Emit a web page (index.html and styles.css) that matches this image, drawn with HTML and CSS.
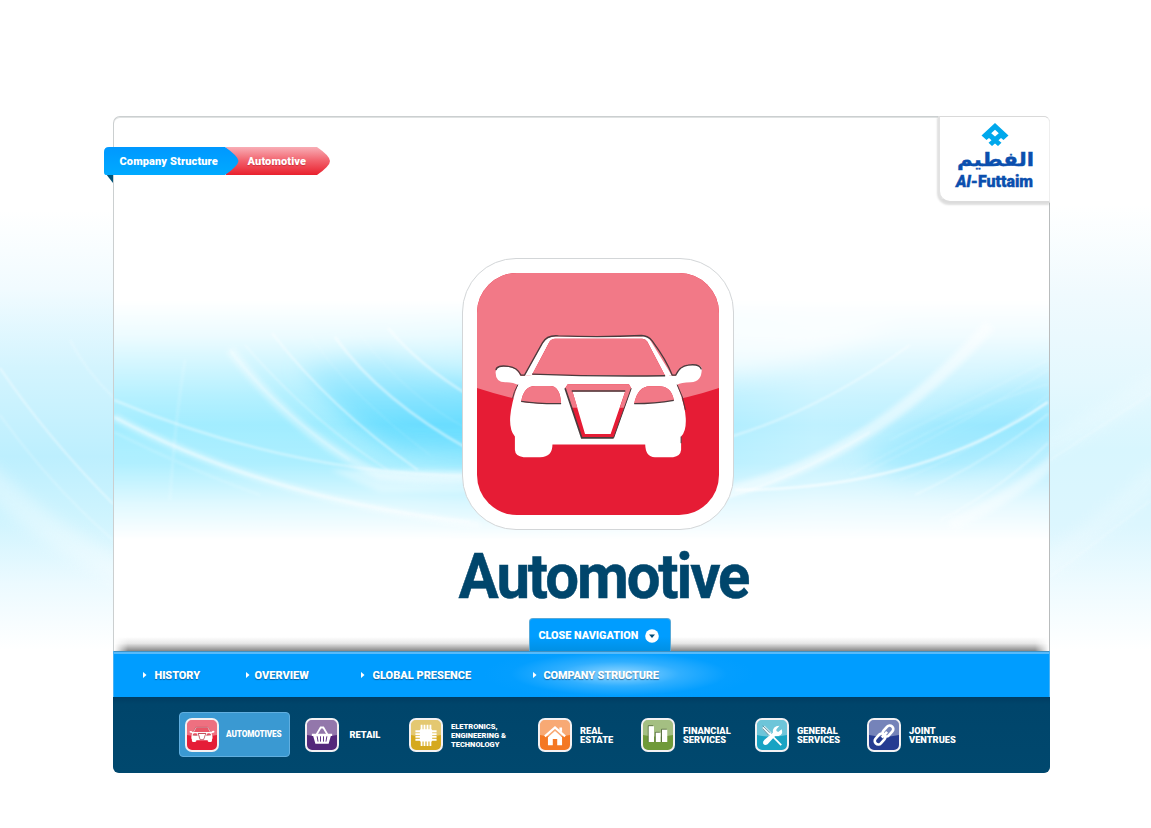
FILE: index.html
```html
<!DOCTYPE html>
<html lang="en">
<head>
<meta charset="utf-8">
<title>Al-Futtaim - Automotive</title>
<link rel="stylesheet" href="styles.css">
</head>
<body>
<svg class="page-waves" viewBox="0 0 1151 828" aria-hidden="true">
  <defs>
    <linearGradient id="outL" x1="0" y1="210" x2="0" y2="650" gradientUnits="userSpaceOnUse">
      <stop offset="0" stop-color="#fff"/><stop offset=".18" stop-color="#f1fbff"/><stop offset=".36" stop-color="#d3f4fe"/><stop offset=".56" stop-color="#bdeffe"/><stop offset=".7" stop-color="#cff4fe"/><stop offset=".85" stop-color="#ecfaff"/><stop offset="1" stop-color="#fff"/>
    </linearGradient>
    <linearGradient id="outR" x1="0" y1="205" x2="0" y2="650" gradientUnits="userSpaceOnUse">
      <stop offset="0" stop-color="#fff"/><stop offset=".2" stop-color="#f0fafe"/><stop offset=".4" stop-color="#e4f8fe"/><stop offset=".55" stop-color="#d8f6fe"/><stop offset=".72" stop-color="#dcf6fe"/><stop offset=".86" stop-color="#effbff"/><stop offset="1" stop-color="#fff"/>
    </linearGradient>
    <filter id="soft" x="-50%" y="-50%" width="200%" height="200%"><feGaussianBlur stdDeviation="7"/></filter>
    <filter id="fine"><feGaussianBlur stdDeviation=".8"/></filter>
  </defs>
  <rect x="0" y="205" width="575" height="450" fill="url(#outL)"/>
  <rect x="575" y="205" width="576" height="450" fill="url(#outR)"/>
  <g fill="none" stroke="#fff">
    <path d="M-20 470Q50 540 140 580" stroke-width="26" opacity=".3" filter="url(#soft)"/>
    <path d="M0 368Q45 435 113 504" stroke-width="1.600" opacity=".5" filter="url(#fine)"/>
    <path d="M0 415Q50 485 113 540M70 340Q85 370 113 397" stroke-width="2" opacity=".22" filter="url(#fine)"/>
    <path d="M1040 450Q1100 420 1160 380M1040 570Q1105 525 1160 470" stroke-width="20" opacity=".2" filter="url(#soft)"/>
    <path d="M1050 460L1151 393M1050 577L1151 500" stroke-width="1.500" opacity=".25" filter="url(#fine)"/>
  </g>
</svg>

<main class="panel">
  <svg class="panel-waves" viewBox="114 117 935 535" preserveAspectRatio="none" aria-hidden="true">
    <defs>
      <linearGradient id="fade" x1="0" y1="300" x2="0" y2="540" gradientUnits="userSpaceOnUse">
        <stop offset="0" stop-color="#000"/><stop offset=".15" stop-color="#333"/><stop offset=".4" stop-color="#ccc"/><stop offset=".52" stop-color="#fff"/><stop offset=".68" stop-color="#ddd"/><stop offset=".85" stop-color="#555"/><stop offset="1" stop-color="#000"/>
      </linearGradient>
      <linearGradient id="sky" x1="114" y1="0" x2="1049" y2="0" gradientUnits="userSpaceOnUse">
        <stop offset="0" stop-color="#a4edff"/><stop offset=".3" stop-color="#9fecff"/><stop offset=".42" stop-color="#8ae6ff"/><stop offset=".6" stop-color="#a9ecff"/><stop offset=".75" stop-color="#c0f1ff"/><stop offset="1" stop-color="#b4eeff"/>
      </linearGradient>
      <mask id="band" maskUnits="userSpaceOnUse" x="114" y="280" width="935" height="280"><rect x="114" y="280" width="935" height="280" fill="url(#fade)"/></mask>
      <filter id="blur12" x="-50%" y="-50%" width="200%" height="200%"><feGaussianBlur stdDeviation="11"/></filter>
      <filter id="blur3" x="-20%" y="-20%" width="140%" height="140%"><feGaussianBlur stdDeviation="2.500"/></filter>
      <filter id="blur1" x="-20%" y="-20%" width="140%" height="140%"><feGaussianBlur stdDeviation=".8"/></filter>
    </defs>
    <g mask="url(#band)">
      <rect x="114" y="280" width="935" height="280" fill="url(#sky)"/>
      <path d="M300 365Q350 430 400 452L510 455V385Q440 375 380 345Z" fill="#5ad9ff" opacity=".72" filter="url(#blur12)"/>
      <path d="M860 455Q960 400 1060 365V430Q960 480 900 480Z" fill="#7fe2ff" opacity=".5" filter="url(#blur12)"/>
      <path d="M720 375Q820 365 900 320H700Z" fill="#fff" opacity=".6" filter="url(#blur12)"/>
      <path d="M380 492H480V470H330Z" fill="#fff" opacity=".35" filter="url(#blur3)"/>
    </g>
    <g fill="none" stroke="#fff">
      <path d="M230 350Q300 440 380 475Q430 480 470 478" stroke-width="9" opacity=".38" filter="url(#blur3)"/>
      <path d="M114 417Q270 500 480 525" stroke-width="6" opacity=".5" filter="url(#blur3)"/>
      <path d="M114 417Q270 500 470 522M114 400Q290 474 470 476" stroke-width="2.500" opacity=".4" filter="url(#blur1)"/>
      <path d="M272 333Q330 408 418 470" stroke-width="1.500" opacity=".6" filter="url(#blur1)"/>
      <path d="M245 345Q310 420 388 470M230 350Q280 415 350 460" stroke-width="1.400" opacity=".35" filter="url(#blur1)"/>
      <path d="M335 337Q380 400 470 450M388 328Q420 366 470 396" stroke-width="2.400" opacity=".5" filter="url(#blur1)"/>
      <path d="M360 335Q410 400 470 430M310 335Q350 395 430 455" stroke-width="1" opacity=".2" filter="url(#blur1)"/>
      <path d="M114 432Q190 470 260 495M185 360Q175 420 170 500" stroke-width="3" opacity=".14" filter="url(#blur1)"/>
      <path d="M725 492Q870 460 990 325" stroke-width="12" opacity=".5" filter="url(#blur3)"/>
      <path d="M730 437Q820 410 910 345M728 497Q790 480 870 432" stroke-width="2" opacity=".45" filter="url(#blur1)"/>
      <path d="M735 490Q920 490 1048 402" stroke-width="2.400" opacity=".7" filter="url(#blur1)"/>
      <path d="M915 495Q990 460 1048 414M940 520Q1000 490 1048 443" stroke-width="1.500" opacity=".4" filter="url(#blur1)"/>
      <path d="M950 525Q1010 500 1060 455" stroke-width="12" opacity=".4" filter="url(#blur3)"/>
      <path d="M870 470Q970 420 1048 370M890 440Q970 400 1048 360M850 475Q960 410 1048 384M900 480Q980 450 1048 395" stroke-width="1" opacity=".25" filter="url(#blur1)"/>
    </g>
  </svg>

  <nav class="crumbs">
    <span class="crumb-fold"></span>
    <a class="crumb crumb-root"><span>Company Structure</span></a>
    <a class="crumb crumb-leaf"><span>Automotive</span></a>
  </nav>

  <div class="logo">
    <svg viewBox="0 0 110 86" role="img" aria-label="Al-Futtaim">
      <path fill="#00a8ec" fill-rule="evenodd" d="M55 6L68.500 18.500L63.500 23L61 21L58.500 23.200L61.500 25.800L58 29L55 26.500L52 29L48.500 25.800L51.500 23.200L49 21L46.500 23L41.500 18.500ZM55 12.800L51.200 16.200L55 19.600L58.800 16.200Z"/>
      <text class="logo-ar" x="94" y="49" direction="rtl" textLength="77" lengthAdjust="spacingAndGlyphs">الفطيم</text>
      <text class="logo-en" x="16" y="70" textLength="77" lengthAdjust="spacingAndGlyphs"><tspan font-style="italic">Al</tspan>-Futtaim</text>
    </svg>
  </div>

  <section class="hero">
    <div class="badge">
      <svg viewBox="65 68 728 728" aria-hidden="true">
        <defs>
          <g id="car">
            <path fill="#fff" stroke="none" d="M236 374L287 265Q292 258 300 262H560Q573 258 580 264L645 378H662Q675 346 708 344Q740 342 741 356Q742 395 708 397Q678 398 667 404Q692 470 693 505Q695 545 679 560V600Q677 620 655 622H600Q572 622 571 584H292Q292 622 255 622H205Q180 620 179 600V560Q162 540 165 500Q168 460 188 404Q170 396 150 397Q120 396 121 366Q122 346 155 350Q185 352 196 378H210Z"/>
            <path d="M208 378L262 280Q275 258 300 259H560Q575 257 583 265L652 378L636 374L585 280Q578 266 560 266H300Q288 266 282 276L234 374Z" fill="#fff"/>
          </g>
          <clipPath id="tileClip"><rect x="65" y="68" width="728" height="728" rx="120"/></clipPath>
          <g id="glass">
            <path d="M231 373L282 277Q288 266 300 266H560Q571 265 577 274L631 377Z"/>
            <path d="M198 455Q205 409 240 408H285Q315 408 318 461Q250 462 198 455ZM538 461Q548 410 585 409H610Q650 408 657 451Q600 461 538 461Z"/>
            <path fill-rule="evenodd" d="M330 415L338 403H522L529 415L476 564H380ZM352 424L390 552H467L511 424Z"/>
          </g>
        </defs>
        <g clip-path="url(#tileClip)">
          <rect x="65" y="68" width="728" height="728" fill="#e61c35"/>
          <path d="M65 68H793V414Q429 534 65 414Z" fill="#f27987"/>
          <use href="#car"/>
          <use href="#glass" fill="#e61c35"/>
          <g fill="#f27987">
            <path d="M231 373L282 277Q288 266 300 266H560Q571 265 577 274L631 377Z"/>
            <path d="M198 455Q205 409 240 408H285Q315 408 318 461Q250 462 198 455ZM538 461Q548 410 585 409H610Q650 408 657 451Q600 461 538 461Z"/>
            <path d="M330 415L338 403H522L529 415L509 473H495L511 424H352L367 473H350Z"/>
          </g>
          <g fill="none" stroke="#4a3b3d" stroke-width="4">
            <path d="M122 360Q124 344 160 349Q186 352 197 375H208L262 278Q275 254 310 257Q440 262 560 256Q580 257 592 272Q635 330 652 375H663Q675 348 700 345Q735 340 740 358"/>
            <path d="M231 372Q430 380 631 377M198 454Q250 462 318 461M538 461Q600 461 657 451"/>
            <path d="M350 423H511M330 415L380 564H476" stroke-width="5"/>
            <path d="M476 564L529 415M188 404Q176 425 172 445M667 404Q686 440 692 480M679 560V580" stroke-width="3"/>
          </g>
        </g>
      </svg>
    </div>
    <h1 class="title">Automotive</h1>
  </section>

  <div class="tab-row">
    <button class="nav-tab"><span>CLOSE NAVIGATION</span>
      <svg viewBox="0 0 14 14" aria-hidden="true"><circle cx="7" cy="7" r="6.800" fill="#fff"/><path d="M4 5.500H10L7 9Z" fill="#004a75"/></svg>
    </button>
  </div>

  <nav class="main-nav">
    <a class="n1"><i></i><span>HISTORY</span></a>
    <a class="n2"><i></i><span>OVERVIEW</span></a>
    <a class="n3"><i></i><span>GLOBAL PRESENCE</span></a>
    <a class="n4"><i></i><span>COMPANY STRUCTURE</span></a>
  </nav>

  <nav class="sub-nav">
    <a class="item active">
      <svg class="icon red" viewBox="0 0 34 34"><path class="gloss" d="M0 0H34V17Q17 21 0 17Z"/><g transform="translate(-2.600 -3.500) scale(.0455)"><use href="#car"/><use href="#glass" fill="#ea5567"/><path d="M208 375L275 258H580L652 375M198 454L318 461M538 461L657 451M330 410L380 564H476L529 410Z" fill="none" stroke="#7b3841" stroke-width="9"/></g></svg>
      <span class="small">AUTOMOTIVES</span>
    </a>
    <a class="item retail">
      <svg class="icon purple" viewBox="0 0 34 34"><path class="gloss" d="M0 0H34V17Q17 21 0 17Z"/><path d="M10.500 17L15.500 8.500H18.500L23.500 17" fill="none" stroke="#fff" stroke-width="2"/><path d="M5.500 15.500H28.500V18H27L24.500 27H9.500L7 18H5.500Z" fill="#fff"/><path d="M11.500 18.500L12.500 24.500M15.300 18.500V24.500M18.700 18.500V24.500M22.500 18.500L21.500 24.500" stroke="#5a2f83" stroke-width="1.100"/></svg>
      <span>RETAIL</span>
    </a>
    <a class="item">
      <svg class="icon gold" viewBox="0 0 34 34"><path class="gloss" d="M0 0H34V17Q17 21 0 17Z"/><rect x="10" y="10.500" width="14" height="14" rx="1" fill="#fff"/><path d="M12 5.500V29.500M15.300 5.500V29.500M18.700 5.500V29.500M22 5.500V29.500M5 12.700H29M5 16H29M5 19.200H29M5 22.400H29" stroke="#fff" stroke-width="2.100"/></svg>
      <span class="tiny">ELETRONICS,<br>ENGINEERING &amp;<br>TECHNOLOGY</span>
    </a>
    <a class="item low">
      <svg class="icon orange" viewBox="0 0 34 34"><path class="gloss" d="M0 0H34V17Q17 21 0 17Z"/><path d="M5.500 18.500L17 8.500L28.500 18.500" fill="none" stroke="#fff" stroke-width="2.500"/><path d="M22 8.500H25V14L22 11.500ZM9 19.500L17 12.500L25 19.500V28.500H19.500V21.500H14.500V28.500H9Z" fill="#fff"/></svg>
      <span>REAL<br>ESTATE</span>
    </a>
    <a class="item">
      <svg class="icon green" viewBox="0 0 34 34"><path class="gloss" d="M0 0H34V17Q17 21 0 17Z"/><path d="M6 25V6.500H11.500M14 25V14H19M21 25V10.500H27" fill="none" stroke="#52683c" stroke-width="1"/><path d="M6.500 7H12.500V25H6.500ZM14.500 14.500H20V25H14.500ZM21.500 11H27.500V25H21.500Z" fill="#fff"/></svg>
      <span>FINANCIAL<br>SERVICES</span>
    </a>
    <a class="item">
      <svg class="icon teal" viewBox="0 0 34 34"><path class="gloss" d="M0 0H34V17Q17 21 0 17Z"/><path d="M7 8L15 16" stroke="#e9f6f9" stroke-width="4.500"/><path d="M6.500 6.500L15.500 15M6 9.500L13 17" stroke="#4e8190" stroke-width="1"/><path d="M14 15L27.500 28.500" stroke="#fff" stroke-width="2"/><path d="M25.500 6.500L22 10.500V12.500L24 13.500L28 10.500Q30 17 24.500 18L20.500 18L12 27.500Q9 29.500 7 27Q6 24.500 8.500 22.500L18 14.500Q17 7 25.500 6.500Z" fill="#fff"/></svg>
      <span>GENERAL<br>SERVICES</span>
    </a>
    <a class="item low">
      <svg class="icon blue" viewBox="0 0 34 34"><path class="gloss" d="M0 0H34V17Q17 21 0 17Z"/><g fill="none" stroke="#fff" stroke-width="3"><rect x="-4" y="-7" width="8" height="14" rx="4" transform="translate(21.500 12.500) rotate(42)"/><rect x="-4" y="-7" width="8" height="14" rx="4" transform="translate(12.500 21.500) rotate(42)"/><path d="M14.500 20L20.500 13.500"/></g></svg>
      <span>JOINT<br>VENTRUES</span>
    </a>
  </nav>
</main>
</body>
</html>
```
FILE: styles.css
```css
* { box-sizing: border-box; }
body {
  margin: 0;
  width: 1151px;
  height: 828px;
  overflow: hidden;
  background: #fff;
  font-family: Roboto, "Liberation Sans", sans-serif;
  font-weight: 900;
  color: #fff;
}
.page-waves { position: absolute; left: 0; top: 0; width: 1151px; height: 828px; z-index: -1; }
.panel {
  position: relative;
  display: flex;
  flex-direction: column;
  width: 937px;
  height: 657px;
  margin: 116px 0 0 113px;
  border: 1px solid #cbcfd0;
  border-right-color: #b9bcbd;
  border-radius: 7px;
  background: #fff;
  box-shadow: inset 0 1px #dfe2e2;
}
.panel-waves { position: absolute; left: 0; top: 0; width: 935px; height: 535px; border-radius: 6px; }

/* Breadcrumb ribbon overhanging the panel's left edge */
.crumbs { position: absolute; left: -10px; top: 30px; display: flex; height: 28px; }
.crumb { display: flex; align-items: center; font-size: 11px; font-weight: 900; letter-spacing: .12px; }
.crumb-root {
  position: relative;
  z-index: 1;
  width: 135px;
  padding-left: 15.500px;
  background: linear-gradient(#0098ff, #00aaff);
  clip-path: path("M5 0H121Q134 9 134.500 14Q134 19 121 28H2Q0 28 0 25V5Q0 0 5 0Z");
}
.crumb-leaf {
  width: 104px;
  margin-left: -13px;
  padding-left: 21.500px;
  background: linear-gradient(#f8aeb6, #f2606b 50%, #e9202d);
  clip-path: path("M0 0H91Q104 9 104 14Q104 19 91 28H0Z");
}
.crumb-leaf span { text-shadow: 0 1px 1px rgba(160, 0, 20, .4); }
.crumb-fold { position: absolute; left: 2px; top: 27px; width: 7px; height: 9px; background: #005378; clip-path: polygon(0 0, 100% 0, 100% 100%); }

.logo {
  position: absolute;
  right: -1px;
  top: -1px;
  width: 112px;
  height: 87px;
  background: #fff;
  border: 1px solid #d9d9d9;
  border-bottom: 2px solid #dcdcdc;
  border-left: 2px solid #e2e2e2;
  border-right-color: #eee;
  border-radius: 0 6px 0 12px;
  box-shadow: -1px 2px 2px rgba(0, 0, 0, .13);
  clip-path: inset(0 0 -6px -6px);
}
.logo svg { display: block; width: 110px; height: 86px; }
.logo text { fill: #0b4fae; stroke: #0b4fae; stroke-width: .4px; }
.logo-ar { font: bold 19px "DejaVu Sans", sans-serif; }
.logo-en { font: 900 16.5px Roboto, sans-serif; }

.hero { position: relative; display: flex; flex-direction: column; align-items: center; width: 968px; padding-top: 141px; }
.badge { width: 272px; height: 272px; padding: 14px; border: 1px solid #d3d6d8; border-radius: 54px; background: #fff; }
.badge svg { display: block; width: 242px; height: 242px; }
.title {
  margin: 9px 0 0 11px;
  font-size: 63px;
  line-height: 75px;
  font-weight: 700;
  letter-spacing: -2.2px;
  color: #00466c;
  -webkit-text-stroke: .5px #00466c;
  transform: scaleX(.95);
}

.tab-row {
  position: relative;
  display: flex;
  margin-top: auto;
  padding-left: 414.500px;
  height: 33px;
}
.tab-row::before {
  content: "";
  position: absolute;
  left: 0; right: 0; bottom: 0;
  height: 14px;
  background: linear-gradient(rgba(90, 90, 90, 0), rgba(90, 90, 90, .15) 45%, rgba(70, 70, 70, .65));
  mask-image: linear-gradient(90deg, transparent, #000 14px, #000 calc(100% - 14px), transparent);
}
.nav-tab {
  position: relative;
  display: flex;
  align-items: center;
  gap: 7px;
  width: 142px;
  padding: 1px 0 0 9px;
  border: 1px solid #58a9d8;
  border-bottom: 0;
  border-radius: 4px 4px 0 0;
  background: linear-gradient(#009dff 55%, #0090e4);
  color: #fff;
  font: 900 10.8px Roboto, sans-serif;
  white-space: nowrap;
}
.nav-tab svg { width: 14px; height: 14px; flex: none; }

.main-nav {
  position: relative;
  flex: none;
  display: grid;
  grid-template-columns: 103px 115px 172px 1fr;
  align-items: center;
  height: 46px;
  margin: 0 -1px;
  padding: 2px 0 0 28.500px;
  background: radial-gradient(ellipse 135px 27px at 505px 23px, rgba(160, 220, 255, .95), rgba(80, 187, 255, .6) 45%, rgba(20, 164, 255, .18) 80%, rgba(0, 157, 255, 0)), #009dff;
  border: 1px solid #48b2f5;
  border-top: 0;
  border-bottom: 0;
  box-shadow: inset 0 1px #3e91c3, inset 0 3px #56bafb;
  font-size: 11px;
  text-shadow: 0 1px 1px rgba(0, 50, 90, .55);
}
.main-nav a { display: flex; align-items: center; gap: 8px; white-space: nowrap; }
.main-nav .n1 { letter-spacing: -.1px; }
.main-nav .n2 { gap: 5px; }
.main-nav .n4 { gap: 7px; letter-spacing: -.18px; }
.main-nav i { width: 4px; height: 7px; background: #fff; clip-path: polygon(0 0, 100% 50%, 0 100%); }

.sub-nav {
  position: relative;
  flex: none;
  display: grid;
  grid-template-columns: 126px 104px 129px 103px 114px 112px 1fr;
  align-items: start;
  height: 76px;
  margin: 0 -1px -1px;
  padding: 15px 0 0 66px;
  background: linear-gradient(#003c62, #00456b 7px, #00486e);
  border-radius: 0 0 6px 6px;
  font-size: 9.3px;
  line-height: 9.5px;
}
.item { display: flex; align-items: center; gap: 8px; height: 45px; white-space: nowrap; }
.item.low { padding-top: 1px; }
.item.retail { gap: 10.500px; }
.item.active { width: 111px; padding-left: 5px; gap: 7px; border: 1px solid #61afe0; border-radius: 4px; background: #3a99d2; }
.item > span { padding-top: 1px; }
.item.low > span { padding-top: 0; }
.small { font-size: 8.2px; letter-spacing: -.12px; }
.tiny { font-size: 7.5px; line-height: 9px; }
.icon { flex: none; width: 34px; height: 34px; border: 2px solid #f3f1f3; border-radius: 7px; }
.gloss { fill: #fff; fill-opacity: .37; }
.red { background: #e51d37; }
.purple { background: #54287b; }
.gold { background: #d5a91f; }
.orange { background: #f47824; }
.green { background: #6f9a39; }
.teal { background: #18a3c3; }
.blue { background: #253b91; }
```
